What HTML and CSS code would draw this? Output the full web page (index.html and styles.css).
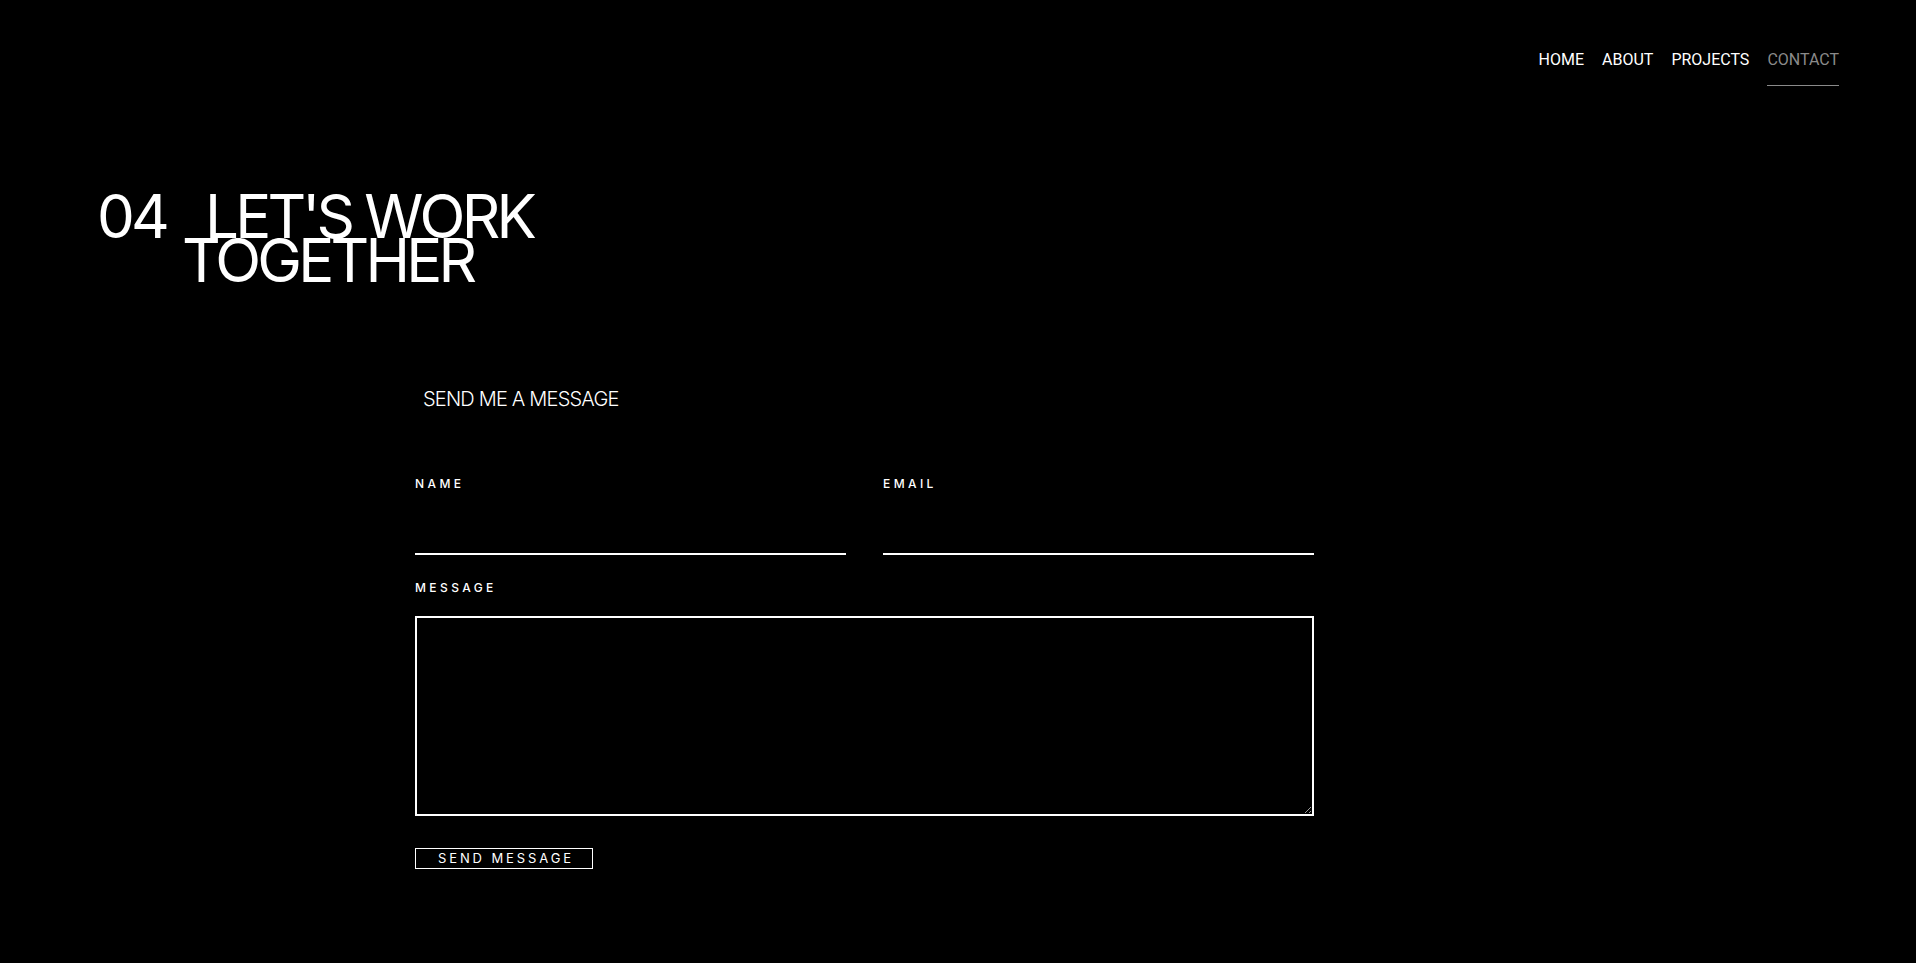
FILE: index.html
```html
<!DOCTYPE html>
<html lang="en">
<head>
<meta charset="utf-8">
<title>Contact</title>
<link rel="stylesheet" href="styles.css">
</head>
<body>
<header class="site-header">
  <nav class="nav">
    <a class="nav-link" href="#">HOME</a>
    <a class="nav-link" href="#">ABOUT</a>
    <a class="nav-link" href="#">PROJECTS</a>
    <a class="nav-link active" href="#">CONTACT</a>
  </nav>
</header>
<main class="contact">
  <h1 class="title">
    <span class="title-num">04</span>
    <span class="title-text"><span class="title-line first">LET'S WORK</span><span class="title-line">TOGETHER</span></span>
  </h1>
  <form class="form">
    <h2 class="form-heading">SEND ME A MESSAGE</h2>
    <div class="row">
      <label class="field">
        <span class="label">NAME</span>
        <input class="input" type="text">
      </label>
      <label class="field">
        <span class="label">EMAIL</span>
        <input class="input" type="email">
      </label>
    </div>
    <label class="field message">
      <span class="label">MESSAGE</span>
      <textarea class="textarea"></textarea>
    </label>
    <button class="button" type="button">SEND MESSAGE</button>
  </form>
</main>
</body>
</html>
```
FILE: styles.css
```css
* { box-sizing: border-box; }
html, body { margin: 0; padding: 0; }
body {
  background: #000;
  color: #fff;
  font-family: Inter, "Liberation Sans", sans-serif;
  min-height: 963px;
}
.site-header {
  display: flex;
  justify-content: flex-end;
  padding: 50px 77px 0 0;
}
.nav {
  display: flex;
  gap: 18px;
}
.nav-link {
  color: #fff;
  text-decoration: none;
  font-family: Roboto, "Liberation Sans", sans-serif;
  font-size: 16px;
  line-height: 20px;
  font-weight: 400;
  padding-bottom: 15px;
  border-bottom: 1px solid transparent;
}
.nav-link.active {
  color: #8a8a8a;
  border-bottom-color: #8a8a8a;
}
.contact {
  padding: 0;
}
.title {
  display: flex;
  margin: 108px 0 0 97px;
  font-weight: 400;
  font-size: 60px;
  line-height: 44px;
  letter-spacing: -3.8px;
}
.title-num {
  width: 85px;
}
.title-text {
  display: flex;
  flex-direction: column;
}
.title-line.first {
  padding-left: 23px;
}
.form {
  width: 899px;
  margin: 105px 0 0 415px;
}
.form-heading {
  margin: 0 0 66px 8px;
  font-size: 20px;
  line-height: 24px;
  font-weight: 300;
  letter-spacing: -0.8px;
}
.row {
  display: grid;
  grid-template-columns: 431px 431px;
  column-gap: 37px;
}
.field {
  display: flex;
  flex-direction: column;
}
.label {
  font-size: 12px;
  line-height: 14px;
  font-weight: 500;
  letter-spacing: 3.4px;
}
.input {
  height: 52px;
  margin-top: 12px;
  background: transparent;
  border: none;
  border-bottom: 2px solid #fff;
  color: #fff;
  font: inherit;
  outline: none;
}
.message {
  margin-top: 26px;
}
.textarea {
  margin-top: 21px;
  height: 200px;
  background: #000;
  border: 2px solid #fff;
  color: #fff;
  font: inherit;
  resize: both;
  outline: none;
}
.button {
  display: block;
  margin-top: 32px;
  width: 178px;
  height: 21px;
  padding: 0 0 0 4px;
  background: transparent;
  border: 1px solid #fff;
  color: #fff;
  font-family: Inter, "Liberation Sans", sans-serif;
  font-size: 13px;
  letter-spacing: 2.9px;
  line-height: 19px;
  cursor: pointer;
}
```
